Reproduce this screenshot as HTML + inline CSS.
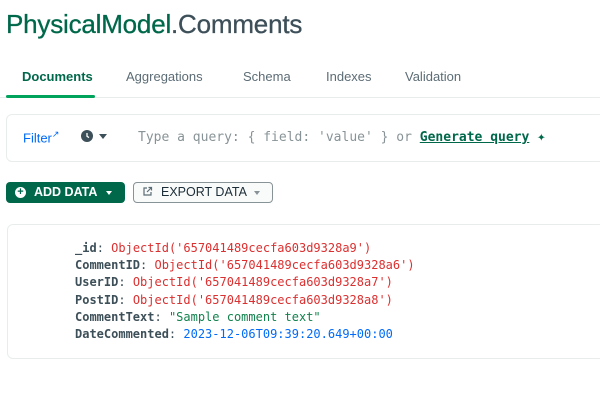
<!DOCTYPE html>
<html><head><style>
body{margin:0;width:600px;height:402px;overflow:hidden;background:#fff;font-family:"Liberation Sans",sans-serif;position:relative}
.a{position:absolute;white-space:nowrap}
.mono{font-family:"DejaVu Sans Mono","Liberation Mono",monospace;font-size:12px}
</style></head><body>
<div class="a" style="left:6px;top:9px;font-size:26px;letter-spacing:-0.2px;-webkit-text-stroke:0.3px"><span style="color:#00684A">PhysicalModel</span><span style="color:#3d4f58">.Comments</span></div>
<div class="a" style="left:22px;top:69px;font-size:13px;font-weight:bold;color:#00684A">Documents</div>
<div class="a" style="left:126px;top:69px;font-size:13px;color:#5c6c75">Aggregations</div>
<div class="a" style="left:243px;top:69px;font-size:13px;color:#5c6c75">Schema</div>
<div class="a" style="left:326px;top:69px;font-size:13px;color:#5c6c75">Indexes</div>
<div class="a" style="left:405px;top:69px;font-size:13px;color:#5c6c75">Validation</div>
<div class="a" style="left:0;top:97px;width:600px;height:1px;background:#e8edeb"></div>
<div class="a" style="left:6px;top:95px;width:89px;height:3px;background:#00a35c;border-radius:2px"></div>
<div class="a" style="left:6px;top:114px;width:620px;height:46px;border:1px solid #e8edeb;border-radius:6px"></div>
<div class="a" style="left:23px;top:129px;font-size:13px;color:#016bf8">Filter<sup style="font-size:9px">&#x2197;</sup></div>
<svg class="a" style="left:81px;top:130px" width="12" height="12" viewBox="0 0 12 12"><circle cx="6" cy="6" r="6" fill="#3d4f58"/><path d="M6 3v3.3l2 1.3" stroke="#fff" stroke-width="1.3" fill="none"/></svg>
<div class="a" style="left:99px;top:134px;width:0;height:0;border-left:4px solid transparent;border-right:4px solid transparent;border-top:5px solid #3d4f58"></div>
<div class="a mono" style="left:138px;top:129px;font-size:13px;color:#889397">Type a query: { field: 'value' } or <span style="color:#00684A;font-weight:bold;text-decoration:underline">Generate query</span> <span style="color:#00684A;font-size:14px">✦</span></div>
<div class="a" style="left:6px;top:182px;width:119px;height:21px;background:#00684A;border-radius:4px"></div>
<div class="a" style="left:15px;top:187px;width:11px;height:11px;border-radius:50%;background:#fff;color:#00684A;font-size:11px;line-height:11px;text-align:center;font-weight:bold">+</div>
<div class="a" style="left:34px;top:185px;font-size:12.5px;font-weight:bold;color:#fff">ADD DATA</div>
<div class="a" style="left:106px;top:191px;border-left:3.5px solid transparent;border-right:3.5px solid transparent;border-top:4px solid #fff"></div>
<div class="a" style="left:133px;top:182px;width:138px;height:19px;border:1px solid #889397;border-radius:4px;background:#f9fbfa"></div>
<svg class="a" style="left:142px;top:186px" width="11" height="11" viewBox="0 0 11 11"><path d="M5 2H2v7h7V6" stroke="#5c6c75" stroke-width="1.2" fill="none"/><path d="M5 6l4-4M6.5 1.5H9.5V4.5" stroke="#5c6c75" stroke-width="1.2" fill="none"/></svg>
<div class="a" style="left:161px;top:185px;font-size:12.5px;color:#1c2d38">EXPORT DATA</div>
<div class="a" style="left:254px;top:191px;border-left:3.5px solid transparent;border-right:3.5px solid transparent;border-top:4px solid #889397"></div>
<div class="a" style="left:7px;top:224px;width:620px;height:133px;border:1px solid #e8edeb;border-radius:6px"></div>
<div class="a mono" style="left:75px;top:240px;line-height:17.2px;color:#3d4f58">
<div><b>_id</b>: <span style="color:#db3030">ObjectId('657041489cecfa603d9328a9')</span></div>
<div><b>CommentID</b>: <span style="color:#db3030">ObjectId('657041489cecfa603d9328a6')</span></div>
<div><b>UserID</b>: <span style="color:#db3030">ObjectId('657041489cecfa603d9328a7')</span></div>
<div><b>PostID</b>: <span style="color:#db3030">ObjectId('657041489cecfa603d9328a8')</span></div>
<div><b>CommentText</b>: <span style="color:#12824d">"Sample comment text"</span></div>
<div><b>DateCommented</b>: <span style="color:#016bf8">2023-12-06T09:39:20.649+00:00</span></div>
</div>
</body></html>
